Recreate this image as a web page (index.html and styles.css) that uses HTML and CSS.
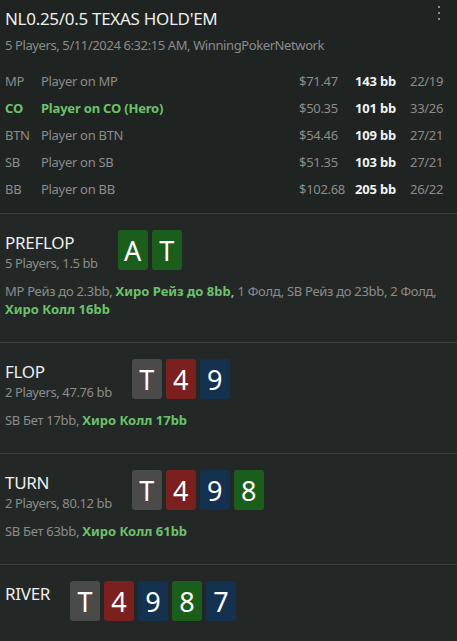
FILE: index.html
```html
<!DOCTYPE html>
<html>
<head>
<meta charset="utf-8">
<link rel="stylesheet" href="styles.css">
</head>
<body>
<div class="page">
  <section class="header">
    <div class="title-row">
      <h1 class="title">NL0.25/0.5 TEXAS HOLD'EM</h1>
      <div class="menu"><span></span><span></span><span></span></div>
    </div>
    <div class="subtitle">5 Players, 5/11/2024 6:32:15 AM, WinningPokerNetwork</div>
    <div class="players">
      <div class="row"><span class="pos">MP</span><span class="name">Player on MP</span><span class="money">$71.47</span><span class="bb">143 bb</span><span class="ratio">22/19</span></div>
      <div class="row hero"><span class="pos">CO</span><span class="name">Player on CO (Hero)</span><span class="money">$50.35</span><span class="bb">101 bb</span><span class="ratio">33/26</span></div>
      <div class="row"><span class="pos">BTN</span><span class="name">Player on BTN</span><span class="money">$54.46</span><span class="bb">109 bb</span><span class="ratio">27/21</span></div>
      <div class="row"><span class="pos">SB</span><span class="name">Player on SB</span><span class="money">$51.35</span><span class="bb">103 bb</span><span class="ratio">27/21</span></div>
      <div class="row"><span class="pos">BB</span><span class="name">Player on BB</span><span class="money">$102.68</span><span class="bb">205 bb</span><span class="ratio">26/22</span></div>
    </div>
  </section>

  <section class="street">
    <div class="street-head">
      <div class="street-info">
        <div class="street-name">PREFLOP</div>
        <div class="street-sub">5 Players, 1.5 bb</div>
      </div>
      <div class="cards">
        <span class="card green">A</span><span class="card green">T</span>
      </div>
    </div>
    <div class="actions">MP Рейз до 2.3bb, <b class="hero-act">Хиро Рейз до 8bb,</b> 1 Фолд, SB Рейз до 23bb, 2 Фолд, <b class="hero-act">Хиро Колл 16bb</b></div>
  </section>

  <section class="street">
    <div class="street-head">
      <div class="street-info">
        <div class="street-name">FLOP</div>
        <div class="street-sub">2 Players, 47.76 bb</div>
      </div>
      <div class="cards">
        <span class="card gray">T</span><span class="card red">4</span><span class="card blue">9</span>
      </div>
    </div>
    <div class="actions">SB Бет 17bb, <b class="hero-act">Хиро Колл 17bb</b></div>
  </section>

  <section class="street">
    <div class="street-head">
      <div class="street-info">
        <div class="street-name">TURN</div>
        <div class="street-sub">2 Players, 80.12 bb</div>
      </div>
      <div class="cards">
        <span class="card gray">T</span><span class="card red">4</span><span class="card blue">9</span><span class="card green">8</span>
      </div>
    </div>
    <div class="actions">SB Бет 63bb, <b class="hero-act">Хиро Колл 61bb</b></div>
  </section>

  <section class="street last">
    <div class="street-head">
      <div class="street-info">
        <div class="street-name">RIVER</div>
      </div>
      <div class="cards">
        <span class="card gray">T</span><span class="card red">4</span><span class="card blue">9</span><span class="card green">8</span><span class="card blue">7</span>
      </div>
    </div>
  </section>
</div>
</body>
</html>
```

FILE: styles.css
```css
html, body {
  margin: 0;
  padding: 0;
  background: #232826;
}
body {
  font-family: "Noto Sans", "Open Sans", sans-serif;
  color: #e6e6e6;
  width: 457px;
  height: 641px;
  overflow: hidden;
}
.page {
  display: flex;
  flex-direction: column;
}
.header {
  background: #1f2321;
  padding: 8px 0 11px 5px;
  border-bottom: 1px solid #3a3f3d;
}
.title-row {
  display: flex;
  justify-content: space-between;
  align-items: flex-start;
}
.title {
  margin: 0;
  font-size: 17px;
  font-weight: 400;
  line-height: 22px;
  letter-spacing: -0.3px;
  color: #eeeeee;
}
.menu {
  display: flex;
  flex-direction: column;
  gap: 4px;
  padding: 0 17px 0 0;
  margin-top: -2px;
}
.menu span {
  width: 2px;
  height: 2px;
  background: #8a8a8a;
}
.subtitle {
  font-size: 13px;
  line-height: 18px;
  letter-spacing: -0.4px;
  color: #8c8c8c;
  margin-top: 6px;
}
.players {
  margin-top: 13px;
  display: flex;
  flex-direction: column;
}
.row {
  display: grid;
  grid-template-columns: 36px 1fr 56px 55px 47px;
  height: 27px;
  align-items: center;
  font-size: 13px;
  letter-spacing: -0.3px;
  color: #8c8c8c;
}
.row .bb {
  color: #f2f2f2;
  font-weight: 700;
  letter-spacing: -0.2px;
}
.row.hero .pos,
.row.hero .name {
  color: #6cc26c;
  font-weight: 700;
  letter-spacing: -0.2px;
}
.street {
  padding: 16px 0 24px 5px;
  border-bottom: 1px solid #3a3f3d;
}
.street.last {
  border-bottom: none;
}
.street-head {
  display: flex;
  align-items: flex-start;
  gap: 20px;
}
.street-info {
  padding-top: 2px;
}
.street-name {
  font-size: 17px;
  line-height: 22px;
  letter-spacing: -0.3px;
  color: #eeeeee;
}
.street-sub {
  font-size: 13px;
  line-height: 18px;
  letter-spacing: -0.4px;
  color: #8c8c8c;
}
.cards {
  display: flex;
  gap: 4px;
}
.card {
  width: 30px;
  height: 40px;
  border-radius: 3px;
  display: flex;
  align-items: center;
  justify-content: center;
  font-size: 27px;
  color: #ffffff;
}
.card.green { background: #1b5e1b; }
.card.gray { background: #4a4a4a; }
.card.red { background: #7b1f1f; }
.card.blue { background: #14314f; }
.actions {
  margin-top: 10px;
  font-size: 13px;
  line-height: 18px;
  letter-spacing: -0.3px;
  color: #8c8c8c;
  padding-right: 10px;
}
.hero-act {
  color: #6cc26c;
  font-weight: 700;
  letter-spacing: 0;
}
```
